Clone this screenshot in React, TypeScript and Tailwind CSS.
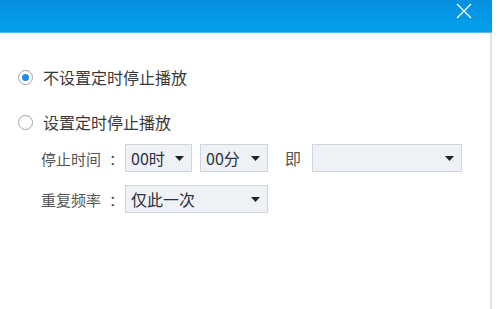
import React from "react";

const font = { fontFamily: '"Noto Sans CJK SC", "Noto Sans", sans-serif' };

function Radio({ checked, label }: { checked?: boolean; label: string }) {
  return (
    <div className="flex items-center h-[20px]">
      <span className="w-[15px] h-[15px] rounded-full border border-[#a0a0a0] bg-white flex items-center justify-center">
        {checked && <span className="w-[7px] h-[7px] rounded-full bg-[#1e8fe8]" />}
      </span>
      <span className="ml-[10px] text-[16px] leading-none text-[#3a3a3a]">{label}</span>
    </div>
  );
}

function Select({ value, width }: { value: string; width: string }) {
  return (
    <div
      className={`${width} h-[28px] border border-[#cfd4da] bg-[#eef2f6] flex items-center justify-between pl-[5px] pr-[7px]`}
    >
      <span className="text-[16px] leading-none text-[#2b3140]">{value}</span>
      <svg width="9" height="5" viewBox="0 0 9 5">
        <path d="M0 0H9L4.5 5Z" fill="#222" />
      </svg>
    </div>
  );
}

function Label({ text }: { text: string }) {
  return (
    <span className="w-[84px] flex text-[15px] leading-none text-[#555]">
      {text}
      <span className="ml-[8px]">：</span>
    </span>
  );
}

export default function App() {
  return (
    <div className="w-[500px] h-[309px] bg-white flex overflow-hidden" style={font}>
      <div className="w-[492px] h-full flex flex-col">
        {/* Title bar */}
        <div className="h-[33px] bg-gradient-to-b from-[#058fe0] to-[#05a0ea] border-b border-[#4cb8f0] flex justify-end items-start pt-[3px] pr-[20px]">
          <svg width="16" height="16" viewBox="0 0 16 16">
            <path d="M1 1L15 15M15 1L1 15" stroke="#fff" strokeWidth="1.3" fill="none" />
          </svg>
        </div>

        {/* Body */}
        <div className="flex-1 border-r-2 border-[#e3e3e3] pl-[18px] pt-[34px]">
          <Radio checked label="不设置定时停止播放" />
          <div className="mt-[25px]">
            <Radio label="设置定时停止播放" />
          </div>

          <div className="mt-[12px] pl-[23px] flex flex-col gap-[13px]">
            <div className="flex items-center">
              <Label text="停止时间" />
              <Select value="00时" width="w-[67px]" />
              <div className="ml-[8px]">
                <Select value="00分" width="w-[68px]" />
              </div>
              <span className="ml-[17px] mr-[11px] text-[16px] leading-none text-[#555]">即</span>
              <Select value="" width="w-[150px]" />
            </div>
            <div className="flex items-center">
              <Label text="重复频率" />
              <Select value="仅此一次" width="w-[143px]" />
            </div>
          </div>
        </div>
      </div>
    </div>
  );
}
